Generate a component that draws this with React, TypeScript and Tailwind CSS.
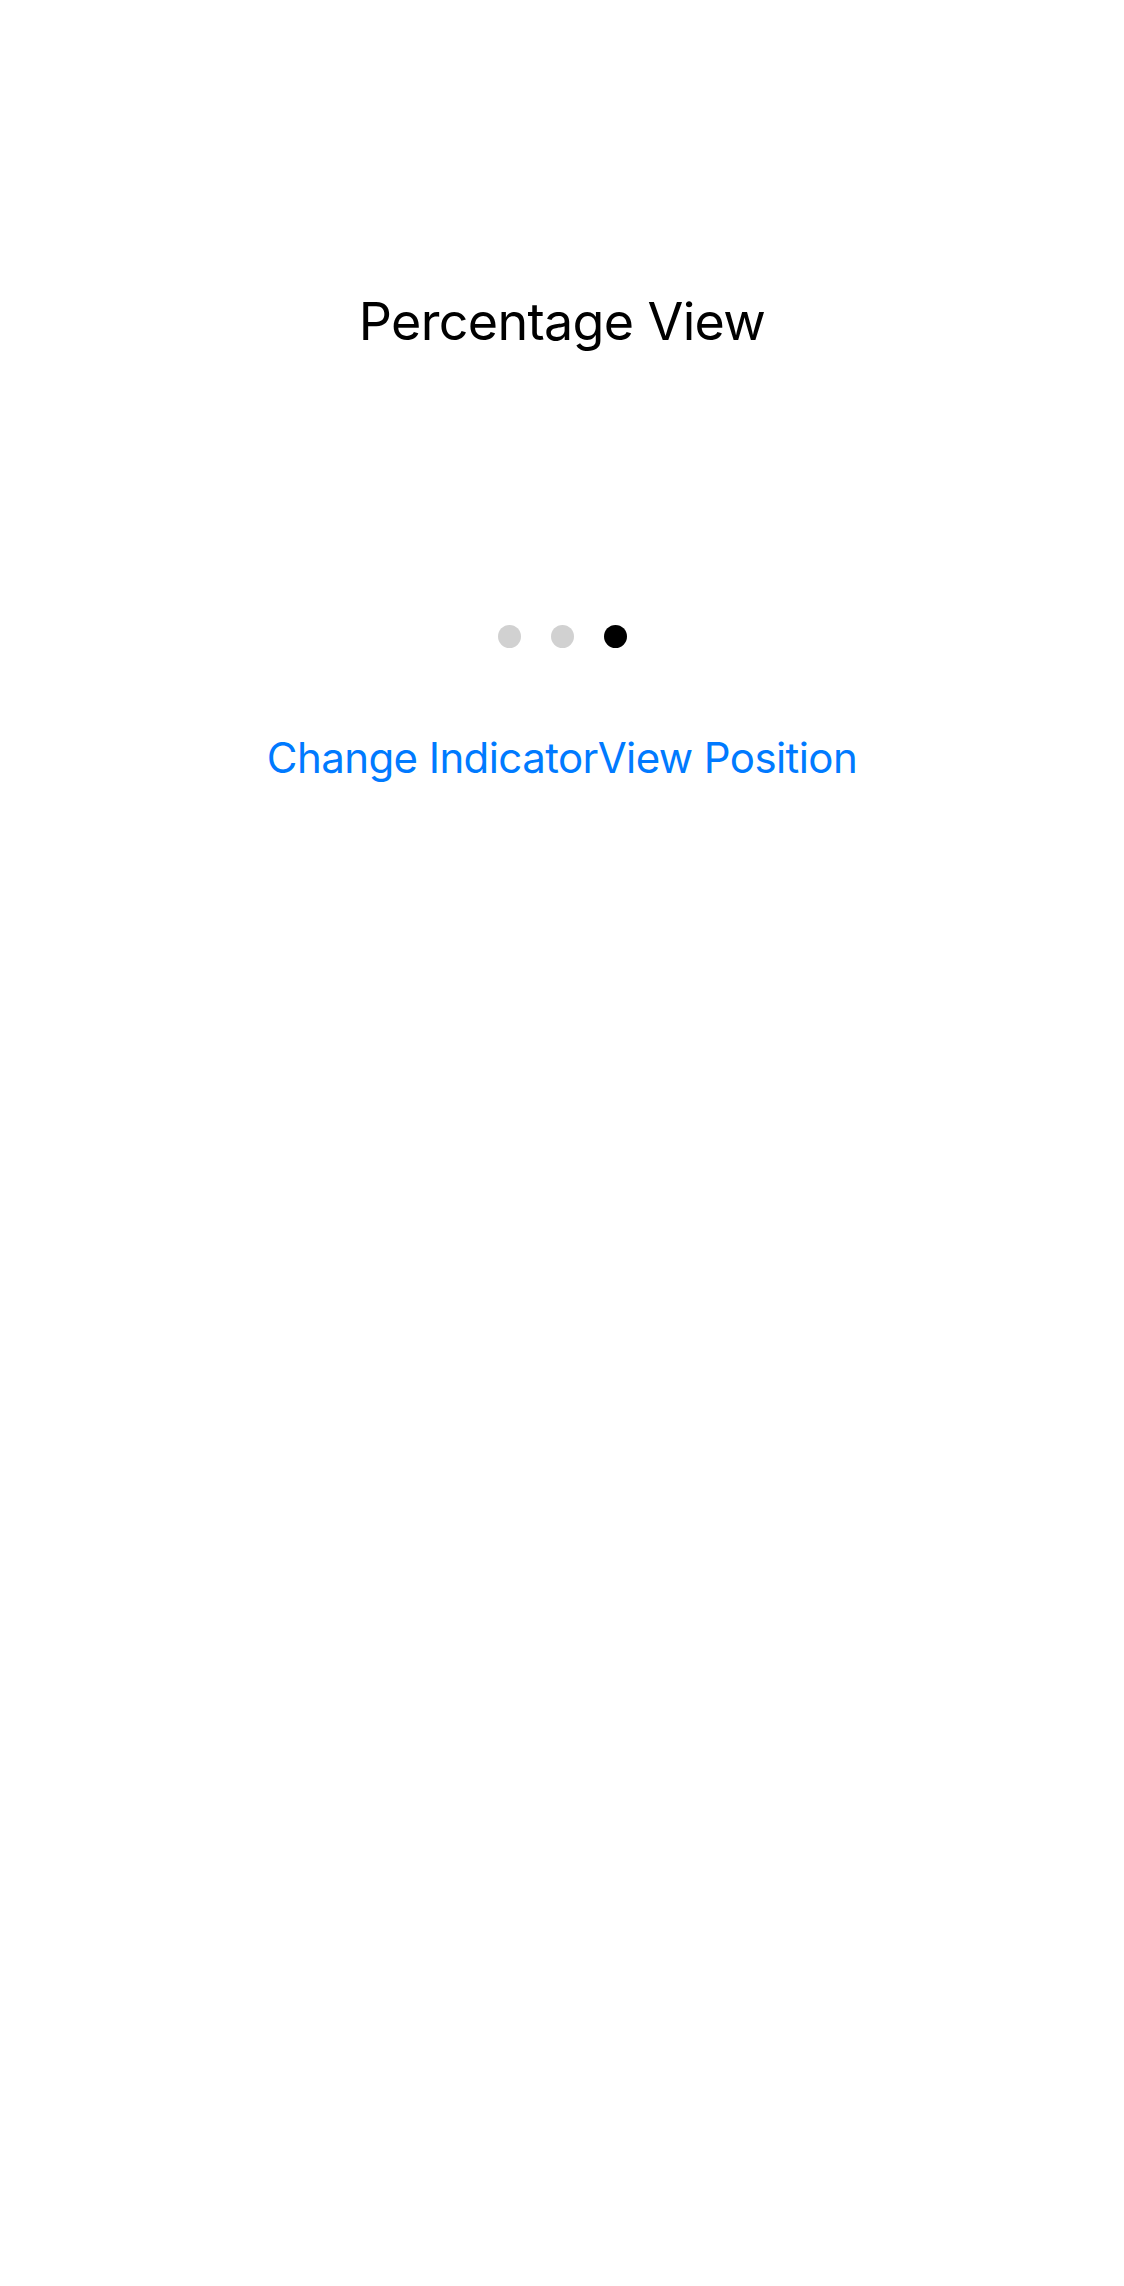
const dots = [false, false, true];

const App = () => {
  return (
    <div className="min-h-[2286px] w-full bg-white font-['Inter',sans-serif]">
      <div className="flex flex-col items-center pt-[296px]">
        <h1 className="text-[52px] leading-none font-normal tracking-[-0.013em] text-black">
          Percentage View
        </h1>

        <div className="mt-[277px] flex items-center gap-[30px]">
          {dots.map((active, i) => (
            <span
              key={i}
              className={
                active
                  ? "block h-[23px] w-[23px] rounded-full bg-black"
                  : "block h-[23px] w-[23px] rounded-full bg-[#d1d1d1]"
              }
            />
          ))}
        </div>

        <button className="mt-[89px] text-[42px] leading-none tracking-[-0.014em] text-[#007aff]">
          Change IndicatorView Position
        </button>
      </div>
    </div>
  );
};

export default App;
